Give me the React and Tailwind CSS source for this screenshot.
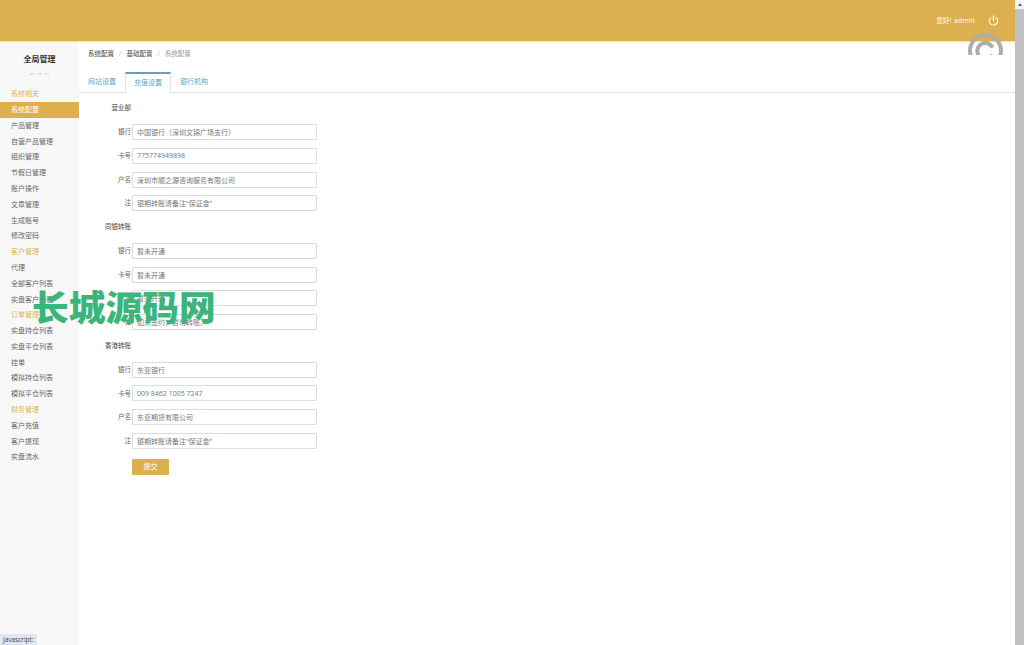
import { Power } from 'lucide-react'

const menu = [
  { label: '系统相关', head: true },
  { label: '系统配置', active: true },
  { label: '产品管理' },
  { label: '自营产品管理' },
  { label: '组织管理' },
  { label: '节假日管理' },
  { label: '账户操作' },
  { label: '文章管理' },
  { label: '生成账号' },
  { label: '修改密码' },
  { label: '客户管理', head: true },
  { label: '代理' },
  { label: '全部客户列表' },
  { label: '实盘客户列表' },
  { label: '订单管理', head: true },
  { label: '实盘持仓列表' },
  { label: '实盘平仓列表' },
  { label: '挂单' },
  { label: '模拟持仓列表' },
  { label: '模拟平仓列表' },
  { label: '财务管理', head: true },
  { label: '客户充值' },
  { label: '客户提现' },
  { label: '实盘流水' },
]

const sections = [
  {
    title: '营业部',
    rows: [
      ['银行', '中国银行（深圳文锦广场支行）'],
      ['卡号', '775774949898'],
      ['户名', '深圳市顺之源咨询服务有限公司'],
      ['注', '银期转账请备注“保证金”'],
    ],
  },
  {
    title: '同银转账',
    rows: [
      ['银行', '暂未开通'],
      ['卡号', '暂未开通'],
      ['户名', '暂未开通'],
      ['注', '如未签约，暂勿转账。'],
    ],
  },
  {
    title: '香港转账',
    rows: [
      ['银行', '东亚银行'],
      ['卡号', '009 8462 1005 7247'],
      ['户名', '东亚期货有限公司'],
      ['注', '银期转账请备注“保证金”'],
    ],
  },
]

function Sidebar() {
  return (
    <aside className="w-[79px] shrink-0 bg-[#f8f8f8]">
      <div className="flex h-[44.5px] flex-col items-center">
        <p className="mt-[11px] text-[8px] leading-[11px] font-bold text-[#333]">全局管理</p>
        <div className="mt-[9px] flex gap-[2px]">
          <span className="h-[2px] w-[5px] bg-[#e4e4e4]" />
          <span className="h-[2px] w-[5px] bg-[#e4e4e4]" />
          <span className="h-[2px] w-[5px] bg-[#e4e4e4]" />
        </div>
      </div>
      <ul>
        {menu.map((m) => (
          <li
            key={m.label}
            className={`flex h-[15.8px] items-center pl-[11px] text-[7px] ${m.active ? 'bg-[#dcaf4f] text-white' : m.head ? 'text-[#dcb45c]' : 'text-[#666]'}`}
          >
            {m.label}
          </li>
        ))}
      </ul>
    </aside>
  )
}

function Row({ label, value }) {
  return (
    <div className="flex h-[23.78px] items-center">
      <label className="w-[52px] text-right text-[6.5px] text-[#666]">{label}</label>
      <input
        readOnly
        value={value}
        className="ml-[1px] h-[16px] w-[185px] rounded-[1px] border border-[#dcdcdc] px-[4px] text-[7px] text-[#777] outline-none"
      />
    </div>
  )
}

export default function App() {
  return (
    <div className="relative flex h-[645px] overflow-hidden bg-white font-['Open_Sans','Noto_Sans_CJK_SC',sans-serif]">
      <div className="flex min-w-0 flex-1 flex-col">
        <header className="flex h-[42px] shrink-0 items-center justify-end border-b border-[#f3dfa8] bg-[#dcaf4f] pr-[16px]">
          <span className="text-[6.5px] text-white">您好!</span>
          <span className="ml-[3px] text-[6.5px] tracking-[0.3px] text-white">admin</span>
          <Power className="ml-[13px] text-[#fff6df]" size={11} strokeWidth={3} />
        </header>
        <div className="flex min-h-0 flex-1">
          <Sidebar />
          <main className="min-w-0 flex-1 bg-white">
            <div className="flex h-[23px] items-center gap-[5px] pl-[9px] text-[6.5px] text-[#444]">
              <span>系统配置</span>
              <span className="text-[#bbb]">/</span>
              <span>基础配置</span>
              <span className="text-[#bbb]">/</span>
              <span className="text-[#999]">系统配置</span>
            </div>
            <div className="mt-[7px] flex h-[21px] items-stretch border-b border-[#e2e2e2] pl-[9px] text-[7px] text-[#5aa5cc]">
              <span className="flex items-center pr-[9px]">网站设置</span>
              <span className="-mb-[1px] flex items-center border-x border-t-2 border-x-[#e2e2e2] border-t-[#6d9cb3] bg-white px-[8px]">
                充值设置
              </span>
              <span className="flex items-center pl-[9px]">银行机构</span>
            </div>
            <form className="pt-[3.4px]">
              {sections.map((s) => (
                <div key={s.title}>
                  <div className="flex h-[23.78px] items-center">
                    <span className="w-[52px] text-right text-[6.5px] text-[#444]">{s.title}</span>
                  </div>
                  {s.rows.map(([label, value]) => (
                    <Row key={label} label={label} value={value} />
                  ))}
                </div>
              ))}
              <button
                type="button"
                className="mt-[6px] ml-[53px] block h-[16px] w-[37px] rounded-[1px] bg-[#dcaf4f] text-[7px] text-white"
              >
                提交
              </button>
            </form>
          </main>
        </div>
      </div>

      {/* scrollbar */}
      <div className="flex w-[9px] shrink-0 flex-col bg-[#f4f4f4]">
        <div className="flex h-[9px] items-center justify-center">
          <span className="h-0 w-0 border-x-[2px] border-b-[3px] border-x-transparent border-b-[#666]" />
        </div>
        <div className="flex-1 bg-[#c1c1c1]" />
      </div>

      {/* copyright mark, cut off under the header */}
      <svg className="absolute top-[33px] left-[968px]" width="35" height="22" viewBox="0 0 35 22" fill="none" stroke="#adadad">
        <circle cx="17.5" cy="17.5" r="15.5" strokeWidth="4" />
        <path d="M24.5 14.5a8 8 0 1 0 0 7" strokeWidth="4" />
      </svg>

      {/* watermark */}
      <div className="absolute top-[285px] left-[32px] origin-left scale-x-[1.05] text-[35px] leading-[46px] font-black whitespace-nowrap text-[#3cb57b]">
        长城源码网
      </div>

      <div className="absolute bottom-0 left-0 flex h-[11px] w-[37px] items-center rounded-tr-[2px] bg-[#dfe7f3] pl-[3px] text-[6.5px] text-[#444]">
        javascript:
      </div>
    </div>
  )
}
